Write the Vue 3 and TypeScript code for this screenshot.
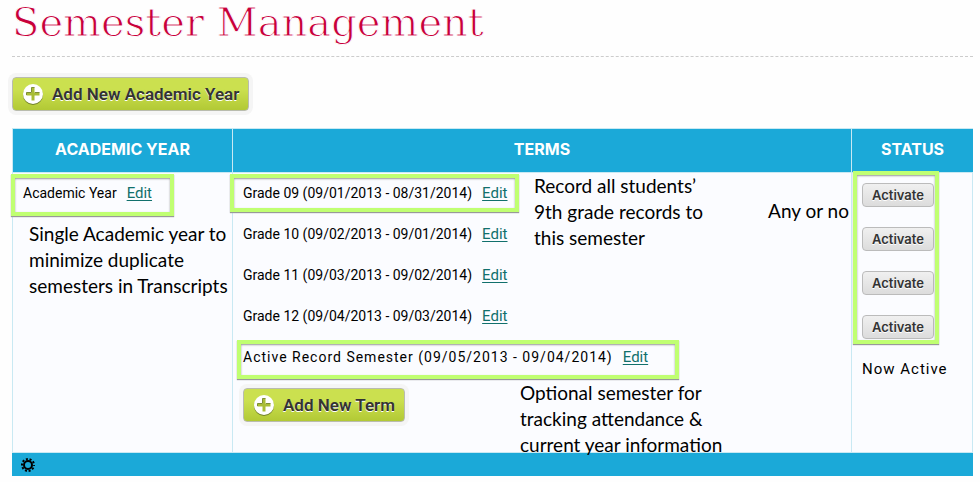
<script setup lang="ts">
interface Term {
  name: string
  dates: string
  active: boolean
}

const terms: Term[] = [
  { name: 'Grade 09', dates: '09/01/2013 - 08/31/2014', active: false },
  { name: 'Grade 10', dates: '09/02/2013 - 09/01/2014', active: false },
  { name: 'Grade 11', dates: '09/03/2013 - 09/02/2014', active: false },
  { name: 'Grade 12', dates: '09/04/2013 - 09/03/2014', active: false },
  { name: 'Active Record Semester', dates: '09/05/2013 - 09/04/2014', active: true },
]
</script>

<template>
  <main class="page">
    <h1 class="title">Semester Management</h1>

    <button type="button" class="add">
      <svg class="plus" viewBox="0 0 22 22" aria-hidden="true">
        <circle cx="11" cy="12" r="10" fill="#71822a" />
        <circle cx="11" cy="11" r="10" fill="#fff" />
        <path d="M9.500 4.500h3v5h5v3h-5v5h-3v-5h-5v-3h5z" fill="#a9bd35" />
        <path d="M9.500 9V4.500h3M4.500 12V9.500h5M13 9.500h4.500" fill="none" stroke="#7d8e35" />
      </svg>
      Add New Academic Year
    </button>

    <table class="grid">
      <thead>
        <tr>
          <th class="col-year">Academic Year</th>
          <th>Terms</th>
          <th class="col-status">Status</th>
        </tr>
      </thead>
      <tbody>
        <tr>
          <td>
            <div class="line">Academic Year <a href="#">Edit</a></div>
            <div class="mark mark-year"></div>
            <p class="note note-year">Single Academic year to<br />minimize duplicate<br />semesters in Transcripts</p>
          </td>
          <td>
            <div v-for="term in terms" :key="term.name" class="line">
              <span :class="{ current: term.active }">{{ term.name }} ({{ term.dates }})</span>
              <a href="#">Edit</a>
            </div>
            <button type="button" class="add add-term">
              <svg class="plus" viewBox="0 0 22 22" aria-hidden="true">
                <circle cx="11" cy="12" r="10" fill="#71822a" />
                <circle cx="11" cy="11" r="10" fill="#fff" />
                <path d="M9.500 4.500h3v5h5v3h-5v5h-3v-5h-5v-3h5z" fill="#a9bd35" />
                <path d="M9.500 9V4.500h3M4.500 12V9.500h5M13 9.500h4.500" fill="none" stroke="#7d8e35" />
              </svg>
              Add New Term
            </button>
            <div class="mark mark-term"></div>
            <div class="mark mark-current"></div>
            <p class="note note-record">Record all students’<br />9th grade records to<br />this semester</p>
            <p class="note note-any">Any or no</p>
            <p class="note note-optional">Optional semester for<br />tracking attendance &amp;<br />current year information</p>
          </td>
          <td>
            <div class="mark mark-status"></div>
            <div class="statuses">
              <template v-for="term in terms" :key="term.name">
                <span v-if="term.active" class="current">Now Active</span>
                <button v-else type="button" class="activate">Activate</button>
              </template>
            </div>
          </td>
        </tr>
      </tbody>
      <tfoot>
        <tr>
          <td colspan="3">
            <svg class="gear" viewBox="0 0 14 14" role="img" aria-label="Settings">
              <circle cx="7" cy="7" r="4" fill="none" stroke="#000" stroke-width="2" />
              <circle cx="7" cy="7" r="6" fill="none" stroke="#000" stroke-width="2" stroke-dasharray="2 1.77" stroke-dashoffset="1" />
            </svg>
          </td>
        </tr>
      </tfoot>
    </table>
  </main>
</template>

<style>
body {
  margin: 0;
  background: #fefefe;
}
</style>

<style scoped>
.page {
  padding: 0 7px 6px 12px;
  font-family: Roboto, "Liberation Sans", sans-serif;
  font-size: 15px;
  line-height: 20px;
  color: #000;
}

.title {
  margin: 0 0 20px;
  height: 56px;
  border-bottom: 1px dashed #ccc;
  font: 400 40px/44px "DejaVu Serif", serif;
  color: #c8003a;
  -webkit-text-stroke: 1px #fefefe;
}

.add {
  display: flex;
  align-items: center;
  gap: 8px;
  height: 34px;
  padding: 0 9px;
  border: 1px solid #b9bcae;
  border-radius: 4px;
  background: linear-gradient(#cbe04f 35%, #b2c935);
  box-shadow: 0 0 0 4px #f5f5f5;
  font: 600 17px/20px Roboto, sans-serif;
  color: #333;
  text-shadow: 0 1px 0 #fff;
}

.plus {
  width: 22px;
  height: 22px;
}

.grid {
  width: 100%;
  margin-top: 17px;
  border-collapse: separate;
  border-spacing: 0;
  border-top: 1px solid #c9e9f3;
  table-layout: fixed;
}

.col-year {
  width: 220px;
}

.col-status {
  width: 122px;
}

th {
  box-sizing: border-box;
  height: 44px;
  padding: 0 0 4px;
  border-left: 1px solid #c9e9f3;
  border-bottom: 1px solid #c9e9f3;
  background: #1ba9d8;
  font-family: Inter, sans-serif;
  font-size: 16px;
  line-height: 20px;
  font-weight: 700;
  color: #fff;
  text-transform: uppercase;
}

tbody td {
  position: relative;
  height: 280px;
  box-sizing: border-box;
  padding: 0 0 0 10px;
  border-left: 1px solid #c9e9f3;
  border-bottom: 1px solid #c9e9f3;
  background: #fbfcff;
  vertical-align: top;
}

tbody td:last-child {
  border-right: 1px solid #c9e9f3;
}

.line {
  display: flex;
  align-items: center;
  gap: 10px;
  box-sizing: border-box;
  height: 41px;
  padding-bottom: 2px;
  font-size: 14px;
  white-space: nowrap;
}

a {
  font-size: 15px;
  color: #11706c;
  text-underline-offset: 2px;
}

.current {
  letter-spacing: 1px;
}

.add-term {
  margin-top: 10px;
}

.statuses {
  display: flex;
  flex-direction: column;
  align-items: flex-start;
  gap: 20px;
  padding-top: 10px;
}

.activate {
  height: 24px;
  padding: 0 9px;
  border: 1px solid #bbb;
  border-radius: 4px;
  background: linear-gradient(#f0f0f0, #dcdcdc);
  font: 600 13px/16px Inter, sans-serif;
  color: #333;
  text-shadow: 0 1px 0 #fff;
}

.mark {
  position: absolute;
  box-sizing: border-box;
  border: 4px solid #c0ff72;
  box-shadow: 0 1px 1px #999, inset 0 1px 2px #999;
  pointer-events: none;
}

.mark-year {
  left: -2px;
  top: 1px;
  width: 163px;
  height: 42px;
}

.mark-term {
  left: -3px;
  top: 1px;
  width: 289px;
  height: 38px;
}

.mark-current {
  left: 4px;
  top: 167px;
  width: 442px;
  height: 39px;
}

.mark-status {
  left: 1px;
  top: -2px;
  width: 86px;
  height: 173px;
}

.note {
  position: absolute;
  margin: 0;
  font: 400 19px/26px Lato, sans-serif;
  white-space: nowrap;
}

.note-year {
  left: 16px;
  top: 48px;
}

.note-record {
  left: 301px;
  top: 0;
}

.note-any {
  right: 2px;
  top: 25px;
}

.note-optional {
  left: 287px;
  top: 207px;
}

tfoot td {
  height: 23px;
  padding: 0 9px;
  background: #1ba9d8;
}

.gear {
  display: block;
  width: 14px;
  height: 14px;
}
</style>
